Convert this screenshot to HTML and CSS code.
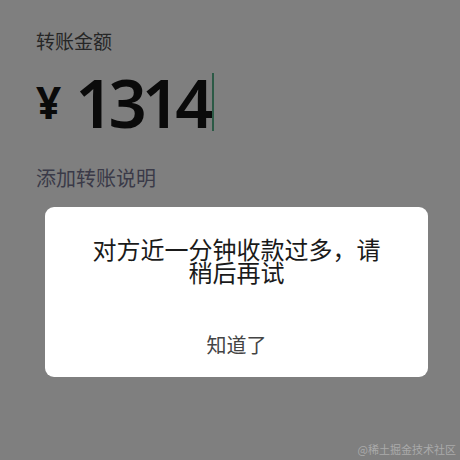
FILE: index.html
```html
<!DOCTYPE html>
<html lang="zh-CN">
<head>
  <meta charset="UTF-8">
  <meta name="viewport" content="width=device-width, initial-scale=1.0">
  <title>转账</title>
  <link rel="stylesheet" href="styles.css">
</head>
<body>
  <div class="screen">
    <!-- Amount form behind the dimmed overlay -->
    <section class="transfer">
      <p class="transfer-label">转账金额</p>
      <div class="amount">
        <span class="amount-currency">¥</span>
        <span class="amount-value">1314</span>
        <span class="amount-caret"></span>
      </div>
      <p class="transfer-note">添加转账说明</p>
    </section>

    <!-- Alert dialog -->
    <div class="dialog">
      <p class="dialog-message">对方近一分钟收款过多，请稍后再试</p>
      <button class="dialog-btn">知道了</button>
    </div>

    <span class="watermark">@稀土掘金技术社区</span>
  </div>
</body>
</html>
```

FILE: styles.css
```css
body {
  margin: 0;
  padding: 0;
  background-color: #7f7f7f;
  font-family: "Noto Sans CJK SC", "Noto Sans", sans-serif;
}

.screen {
  position: relative;
  width: 460px;
  height: 460px;
  overflow: hidden;
  background-color: #7f7f7f;
}

.transfer {
  padding: 28px 0 0 36px;
}

.transfer-label {
  margin: 0;
  font-size: 19px;
  line-height: 26px;
  color: #262626;
}

.amount {
  display: flex;
  align-items: center;
  height: 60px;
  margin-top: 18px;
}

.amount-currency {
  font-family: "Noto Sans", sans-serif;
  font-size: 44px;
  font-weight: 700;
  color: #0a0a0a;
  margin-right: 14px;
}

.amount-value {
  font-family: "Noto Sans", sans-serif;
  font-size: 67px;
  font-weight: 600;
  letter-spacing: -5px;
  color: #0a0a0a;
  line-height: 60px;
}

.amount-caret {
  width: 2px;
  height: 58px;
  margin-left: 4px;
  background-color: #2c5a46;
}

.transfer-note {
  margin: 33px 0 0;
  font-size: 20px;
  line-height: 26px;
  color: #3a3a48;
}

.dialog {
  position: absolute;
  left: 45px;
  top: 207px;
  width: 383px;
  height: 170px;
  box-sizing: border-box;
  padding: 30px 40px 0;
  background-color: #fff;
  border-radius: 9px;
  display: flex;
  flex-direction: column;
  align-items: center;
}

.dialog-message {
  margin: 0;
  font-size: 24px;
  line-height: 23px;
  color: #1a1a1a;
  text-align: center;
}

.dialog-btn {
  margin-top: 47px;
  padding: 0;
  border: none;
  background: none;
  font-family: inherit;
  font-size: 20px;
  color: #444;
}

.watermark {
  position: absolute;
  right: 4px;
  bottom: 3px;
  font-size: 11px;
  color: #aaa;
}
```
